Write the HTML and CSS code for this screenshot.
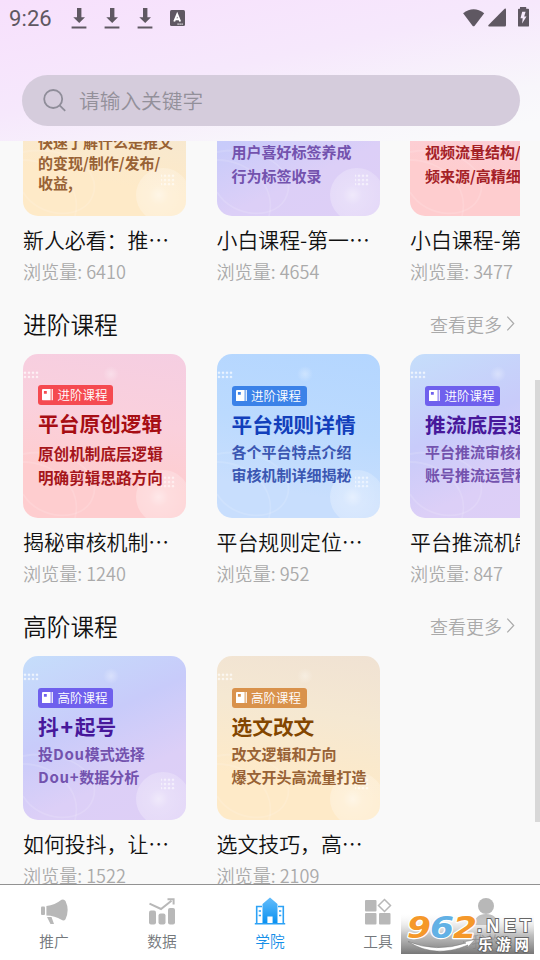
FILE: index.html
```html
<!DOCTYPE html>
<html lang="zh-CN">
<head>
<meta charset="utf-8">
<title>学院</title>
<link rel="stylesheet" href="styles.css">
</head>
<body>
<svg class="defs" aria-hidden="true">
  <defs>
    <radialGradient id="orb" cx="0.42" cy="0.5" r="0.6"><stop offset="0" stop-color="#fff" stop-opacity=".55"/><stop offset=".3" stop-color="#fff" stop-opacity=".32"/><stop offset="1" stop-color="#fff" stop-opacity=".2"/></radialGradient>
    <radialGradient id="glow"><stop offset="0" stop-color="#fff" stop-opacity=".32"/><stop offset="1" stop-color="#fff" stop-opacity="0"/></radialGradient>
    <pattern id="dots" width="4" height="4.2" patternUnits="userSpaceOnUse"><circle cx="2" cy="2" r="1.25" fill="#fff"/></pattern>
    <linearGradient id="azure" x1="0" y1="0" x2="0" y2="1"><stop offset="0" stop-color="#65bdfb"/><stop offset="1" stop-color="#0790f0"/></linearGradient>
    <linearGradient id="shade" x1="0" y1="0" x2="0" y2="1"><stop offset="0" stop-color="#fff" stop-opacity="0"/><stop offset=".55" stop-color="#aaa" stop-opacity=".75"/><stop offset="1" stop-color="#777"/></linearGradient>
    <symbol id="decor" viewBox="0 0 163.5 164">
      <circle cx="140" cy="143" r="27" fill="url(#orb)"/>
      <circle cx="88" cy="20" r="8" fill="url(#glow)"/>
      <g fill="none" stroke="#fff" stroke-opacity=".13" stroke-width="1.8"><path d="M0 100C45 92 79 118 70 143C61 169 16 167 0 140"/><path d="M0 108C32 108 60 134 52 164"/></g>
      <rect y="16" width="16" height="8.4" fill="url(#dots)" opacity=".75"/>
      <rect x="138" y="121" width="14" height="12.6" fill="url(#dots)" opacity=".6"/>
    </symbol>
    <symbol id="book" viewBox="0 0 12 12"><path fill="#fff" fill-rule="evenodd" d="M1 0H9V12H1Q0 12 0 11V1Q0 0 1 0ZM2 2V5H5V2ZM10 0H11.3V12H10Z"/></symbol>
    <symbol id="download" viewBox="0 0 16 22"><path fill="currentColor" d="M6 0H10.4V9.2H14L8.2 15L2.3 9.2H6ZM.6 18.6H15.4V20.4H.6Z"/></symbol>
    <symbol id="next" viewBox="0 0 8 15"><path d="M.8.7L7.2 7.5L.8 14.3" fill="none" stroke="#aaa" stroke-width="1.2"/></symbol>
  </defs>
</svg>
<div class="screen">
  <header class="top">
    <div class="status">
      <span class="time">9:26</span>
      <svg class="dl"><use href="#download"/></svg>
      <svg class="dl"><use href="#download"/></svg>
      <svg class="dl"><use href="#download"/></svg>
      <svg class="ime" viewBox="0 0 15 16"><rect width="15" height="16" rx="1.5" fill="#5f5862"/><path d="M4.2 11.5L7.2 4.2L10.2 11.5M5.4 9.3H9.2" fill="none" stroke="#fff" stroke-width="1.9"/><path d="M7.5 14.2H13.5" stroke="#fff" stroke-width="1.2" stroke-dasharray="1.2 .8"/></svg>
      <svg class="signals" viewBox="0 0 70 22" fill="#5f5862"><path d="M1.1 6.2Q11.6-1.7 22.2 6.2L12.7 18.7Q11.6 20 10.5 18.7Z"/><path d="M44 2.6V18.3Q44 19.5 42.8 19.5H27Q25.5 19.2 26.5 18L42.6 1.8Q44 1 44 2.6Z"/><path fill-rule="evenodd" d="M58 0H64.2V1.8H66.2Q67 1.8 67 2.6V18.7Q67 19.6 66.1 19.6H57Q56 19.6 56 18.7V2.6Q56 1.8 56.9 1.8H58ZM60.2 4.7L58.5 11.2H60.7L60.1 16.5L64.5 9.4H62.2L63.6 4.7Z"/></svg>
    </div>
    <div class="search">
      <svg class="lens" viewBox="0 0 24 24"><circle cx="10.2" cy="10" r="9" /><path d="M16.6 16.4L22.2 21.8"/></svg>
      <span>请输入关键字</span>
    </div>
  </header>

  <main class="feed">
    <section class="group first">
      <div class="row">
        <article class="card">
          <div class="cover tan c-three"><svg class="decor"><use href="#decor"/></svg><p>快速了解什么是推文<br>的变现/制作/发布/<br>收益,</p></div>
          <h3>新人必看：推<i>⋯</i></h3><p class="views">浏览量: 6410</p>
        </article>
        <article class="card">
          <div class="cover violet c-two"><svg class="decor"><use href="#decor"/></svg><p>用户喜好标签养成<br>行为标签收录</p></div>
          <h3>小白课程-第一<i>⋯</i></h3><p class="views">浏览量: 4654</p>
        </article>
        <article class="card">
          <div class="cover pink c-two"><svg class="decor"><use href="#decor"/></svg><p>视频流量结构/<br>频来源/高精细</p></div>
          <h3>小白课程-第</h3><p class="views">浏览量: 3477</p>
        </article>
      </div>
    </section>

    <section class="group">
      <div class="heading"><h2>进阶课程</h2><a>查看更多<svg><use href="#next"/></svg></a></div>
      <div class="row">
        <article class="card">
          <div class="cover pink wide"><svg class="decor"><use href="#decor"/></svg><div class="badge"><svg><use href="#book"/></svg>进阶课程</div><h4>平台原创逻辑</h4><p>原创机制底层逻辑<br>明确剪辑思路方向</p></div>
          <h3>揭秘审核机制<i>⋯</i></h3><p class="views">浏览量: 1240</p>
        </article>
        <article class="card">
          <div class="cover blue"><svg class="decor"><use href="#decor"/></svg><div class="badge"><svg><use href="#book"/></svg>进阶课程</div><h4>平台规则详情</h4><p>各个平台特点介绍<br>审核机制详细揭秘</p></div>
          <h3>平台规则定位<i>⋯</i></h3><p class="views">浏览量: 952</p>
        </article>
        <article class="card">
          <div class="cover violet"><svg class="decor"><use href="#decor"/></svg><div class="badge"><svg><use href="#book"/></svg>进阶课程</div><h4>推流底层逻</h4><p>平台推流审核机<br>账号推流运营秘</p></div>
          <h3>平台推流机制</h3><p class="views">浏览量: 847</p>
        </article>
      </div>
    </section>

    <section class="group">
      <div class="heading"><h2>高阶课程</h2><a>查看更多<svg><use href="#next"/></svg></a></div>
      <div class="row">
        <article class="card">
          <div class="cover violet"><svg class="decor"><use href="#decor"/></svg><div class="badge"><svg><use href="#book"/></svg>高阶课程</div><h4>抖<b class="plus">+</b>起号</h4><p>投<span class="latin">Dou</span>模式选择<br><span class="latin">Dou+</span>数据分析</p></div>
          <h3>如何投抖，让<i>⋯</i></h3><p class="views">浏览量: 1522</p>
        </article>
        <article class="card">
          <div class="cover tan"><svg class="decor"><use href="#decor"/></svg><div class="badge"><svg><use href="#book"/></svg>高阶课程</div><h4>选文改文</h4><p>改文逻辑和方向<br>爆文开头高流量打造</p></div>
          <h3>选文技巧，高<i>⋯</i></h3><p class="views">浏览量: 2109</p>
        </article>
      </div>
    </section>
    <div class="scrollbar"></div>
  </main>

  <nav class="tabs">
    <a><svg viewBox="0 0 30 30" fill="#b8b8b8"><rect x="2" y="10.5" width="4" height="8.5" rx="1"/><path d="M7.4 10Q16 9 22.5 3.8Q25 2.7 26.5 5Q30.8 14 26.5 23.3Q24.8 25.5 22.4 23.7Q16 19.8 7.4 19.5ZM8 21H12.5L15 28H11.5Z"/></svg><span>推广</span></a>
    <a><svg viewBox="0 0 30 30" fill="#b8b8b8"><rect x="2" y="14.5" width="7" height="14" rx="2"/><rect x="11.5" y="17.5" width="7" height="11" rx="2"/><rect x="21" y="12" width="7" height="16.5" rx="2"/><path d="M2.5 7.7L14 13L24.5 4.8M20.5 3.2H26.6V8.5" fill="none" stroke="#b8b8b8" stroke-width="2"/></svg><span>数据</span></a>
    <a class="active"><svg viewBox="0 0 32 30" fill="url(#azure)"><path fill-rule="evenodd" d="M8.5 27.5V8L16 1.5L23.5 8V27.5H18.6V20.5H13.4V27.5Z"/><path d="M2.7 27V10.5H8M29.3 27V10.5H24M.8 27.7H31.2M4.7 15H7M4.7 19.5H7M25 15H27.3M25 19.5H27.3" fill="none" stroke="#2da2f6" stroke-width="1.6"/></svg><span>学院</span></a>
    <a><svg viewBox="0 0 30 30" fill="#b8b8b8"><rect x="2" y="4" width="11.5" height="11.5" rx="1"/><rect x="2" y="17" width="11.5" height="11.5" rx="1"/><rect x="16" y="17" width="11.5" height="11.5" rx="1"/><path d="M21.5 3.5L27.5 9.5L21.5 15.5L15.5 9.5Z" fill="none" stroke="#b8b8b8" stroke-width="1.5"/></svg><span>工具</span></a>
    <a><svg viewBox="0 0 30 30" fill="#b8b8b8"><circle cx="15" cy="10" r="8"/><path d="M3 29Q4 18 15 18Q26 18 27 29Z"/></svg><span>我的</span></a>
    <svg class="stamp" viewBox="0 0 133 44">
      <rect y="0" width="133" height="42" fill="url(#shade)"/>
      <path d="M7 29.5Q34 47 67 33L66 36L74 27.5L62 30L65 31Q35 41 7 29.5Z" fill="#fff" stroke="#777" stroke-width=".5"/>
      <g font-family="DejaVu Sans, sans-serif" font-weight="700" font-style="italic" font-size="31" stroke="#fff" stroke-width="2.4" paint-order="stroke" stroke-linejoin="round"><text x="6" y="26" fill="#f5982a" textLength="24" lengthAdjust="spacingAndGlyphs">9</text><text x="29" y="26" fill="#62b1e5" textLength="24" lengthAdjust="spacingAndGlyphs">6</text><text x="52" y="26" fill="#f5982a" textLength="24" lengthAdjust="spacingAndGlyphs">2</text></g>
      <g font-weight="700" fill="#fff" stroke="#666" stroke-width="1.8" paint-order="stroke"><text x="76" y="20" font-family="Liberation Sans, sans-serif" font-size="18" textLength="54">.NET</text><text x="77" y="37.5" font-family="Noto Sans CJK SC, sans-serif" font-size="14.5" textLength="51">乐游网</text></g>
    </svg>
  </nav>
</div>
</body>
</html>
```

FILE: styles.css
```css
* { box-sizing: border-box; margin: 0; padding: 0; }
body {
  width: 540px;
  height: 960px;
  overflow: hidden;
  font-family: "Noto Sans CJK SC", sans-serif;
  font-weight: 350;
  background: #fff;
}
.defs { position: absolute; width: 0; height: 0; }
.screen { display: flex; flex-direction: column; height: 960px; }

.top {
  height: 141px;
  flex: none;
  padding: 0 20px 0 22px;
  background: linear-gradient(168deg, #f7e0fc 0%, #f6e8fc 45%, #f8f6fb 78%, #f9f9fb 92%);
}
.status { display: flex; height: 75px; margin-left: -13px; color: #5f5862; }
.time { width: 62px; font: 400 22px/38px Roboto, sans-serif; letter-spacing: .1px; }
.dl { width: 16px; height: 22px; margin: 8px 17px 0 0; }
.ime { width: 15px; height: 16px; margin-top: 10px; }
.signals { width: 70px; height: 22px; margin: 7px -12px 0 auto; flex: none; }
.search {
  display: flex;
  align-items: center;
  height: 51px;
  padding-left: 21px;
  border-radius: 26px;
  background: #d5ccdc;
  color: #93909a;
  font-size: 20.7px;
}
.search span { margin-top: -2px; }
.lens { width: 24px; height: 24px; margin-right: 12px; fill: none; stroke: #8f8d99; stroke-width: 1.8; }

.feed { position: relative; height: 743px; overflow: hidden; background: #f9f9f9; }
.group { height: 302px; padding: 0 20px 0 23px; }
.first { height: 159px; overflow: hidden; }
.first .row { margin-top: -89px; }
.heading { display: flex; justify-content: space-between; height: 54px; padding-right: 5px; line-height: 48px; }
.heading h2 { font-size: 23.7px; font-weight: 350; color: #111; }
.heading a { display: flex; align-items: center; height: 48px; font-size: 18px; color: #aaa; }
.heading a svg { width: 9px; height: 15px; margin: -1px 0 0 4px; }
.row { display: flex; gap: 30.5px; overflow: hidden; }
.card { flex: none; width: 163px; }
.card h3 { height: 32px; margin-top: 7px; font-size: 20.9px; line-height: 32px; font-weight: 350; color: #111; white-space: nowrap; }
.card h3 i { font-style: normal; }
.views { height: 32px; font-size: 18.1px; line-height: 32px; color: #aaa; white-space: nowrap; }

.cover { position: relative; height: 164px; padding: 31.5px 0 0 15px; border-radius: 15px; overflow: hidden; white-space: nowrap; }
.decor { position: absolute; inset: 0; width: 163.5px; height: 164px; }
.badge { position: relative; display: flex; align-items: center; width: 75px; height: 20px; padding-left: 4px; border-radius: 3px; color: #fff; font-size: 12.5px; line-height: 18px; }
.badge svg { width: 11.5px; height: 11.5px; margin-right: 4px; }
.cover h4 { position: relative; height: 35.5px; font-size: 20.7px; line-height: 37px; }
.cover p { position: relative; font-size: 15px; line-height: 22.7px; font-weight: 700; }
.cover.wide p { font-size: 15.6px; line-height: 24.5px; }
.cover.c-three { padding-top: 80px; }
.c-three p { line-height: 20.7px; }
.cover.c-two { padding-top: 88px; }
.c-two p { line-height: 24px; }
.plus { display: inline-block; width: 16px; text-align: center; }
.latin { letter-spacing: .7px; }

.pink { background: linear-gradient(190deg, #f5cee2 0%, #fad0dc 40%, #fecdcf 72%); color: #a42126; }
.pink h4 { color: #a70d13; }
.pink .badge { background: #f54a50; }
.cover.wide { padding-top: 31px; color: #a5151a; }
.blue { background: linear-gradient(190deg, #b4d6ff 0%, #bbdafe 45%, #c8defd 80%); color: #3b57b2; }
.blue h4 { color: #123fbb; }
.blue .badge { background: #3b82e8; }
.violet { background: linear-gradient(155deg, #c5defb 0%, #c8cbfa 40%, #dccff7 70%, #decff6 100%); color: #7352ae; }
.violet h4 { color: #47189b; }
.violet .badge { background: #6f60ed; }
.tan { background: linear-gradient(190deg, #f0e2d3 0%, #f5e8d2 35%, #feeac8 75%); color: #986235; }
.tan h4 { color: #834600; }
.tan .badge { background: #d9924c; }

.scrollbar { position: absolute; right: 0; top: 239px; width: 5px; height: 442px; background: #d8d8d8; }

.tabs { position: relative; display: grid; grid-template-columns: repeat(5, 1fr); height: 76px; border-top: 1px solid #929292; background: #fff; }
.tabs a { display: flex; flex-direction: column; align-items: center; padding-top: 11px; color: #73777b; font-size: 14.7px; line-height: 22px; }
.tabs a svg { width: 30px; height: 30px; margin-bottom: 4px; }
.tabs .active { color: #168fe8; }
.tabs .active svg { width: 32px; }
.stamp { position: absolute; left: 401px; top: 27px; width: 133px; height: 44px; }
```
